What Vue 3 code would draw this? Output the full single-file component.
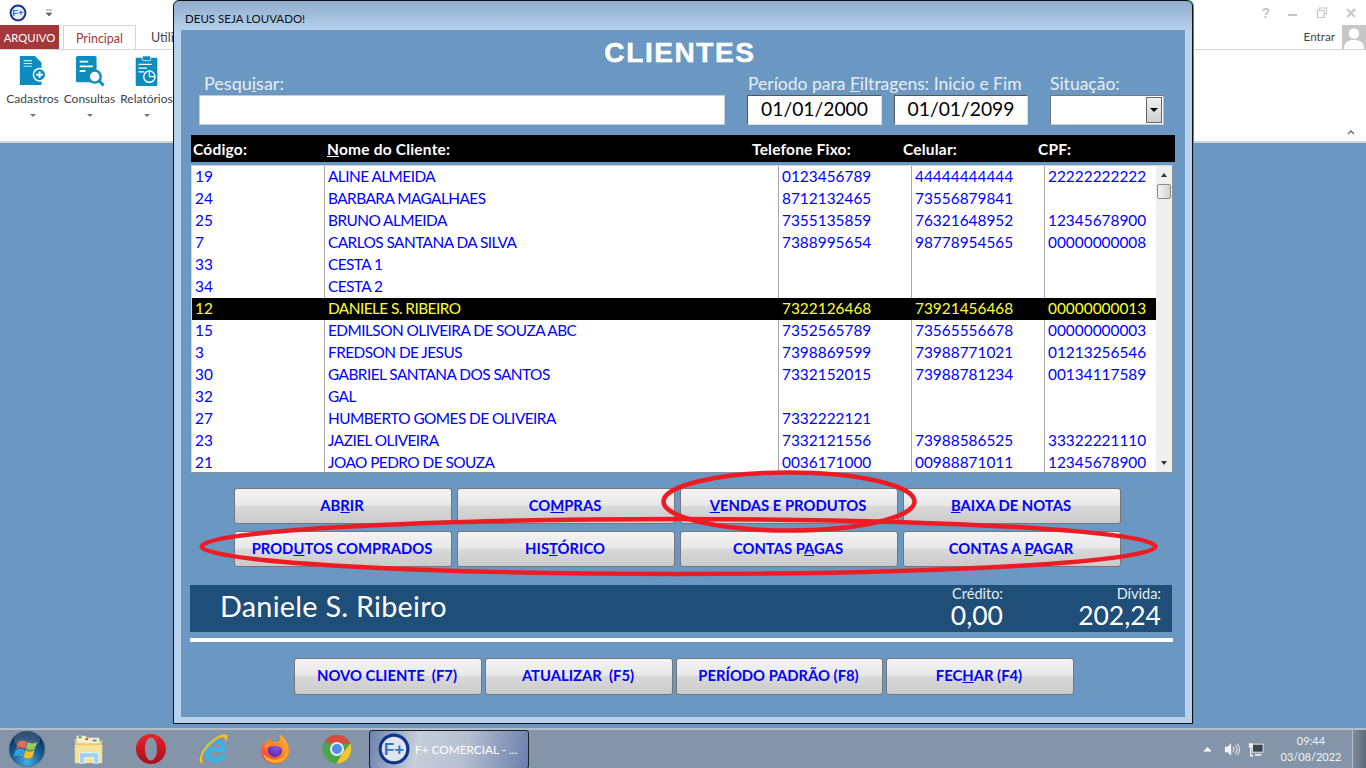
<script setup>
const rows = [
  ['19','ALINE ALMEIDA','0123456789','44444444444','22222222222'],
  ['24','BARBARA MAGALHAES','8712132465','73556879841',''],
  ['25','BRUNO ALMEIDA','7355135859','76321648952','12345678900'],
  ['7','CARLOS SANTANA DA SILVA','7388995654','98778954565','00000000008'],
  ['33','CESTA 1','','',''],
  ['34','CESTA 2','','',''],
  ['12','DANIELE S. RIBEIRO','7322126468','73921456468','00000000013'],
  ['15','EDMILSON OLIVEIRA DE SOUZA ABC','7352565789','73565556678','00000000003'],
  ['3','FREDSON DE JESUS','7398869599','73988771021','01213256546'],
  ['30','GABRIEL SANTANA DOS SANTOS','7332152015','73988781234','00134117589'],
  ['32','GAL','','',''],
  ['27','HUMBERTO GOMES DE OLIVEIRA','7332222121','',''],
  ['23','JAZIEL OLIVEIRA','7332121556','73988586525','33322221110'],
  ['21','JOAO PEDRO DE SOUZA','0036171000','00988871011','12345678900'],
]
</script>

<template>
  <div class="desktop">
    <header class="ribbon">
      <div class="qat">
        <svg class="logo-sm" viewBox="0 0 18 18"><circle cx="9" cy="9" r="7.4" fill="#e8eef5" stroke="#12348c" stroke-width="2"/><text x="9" y="12.4" text-anchor="middle" class="logo-t">F+</text></svg>
        <svg class="qat-arrow" viewBox="0 0 8 8"><path d="M1 1h6M1 4h6L4 7z" fill="#666" stroke="#666" stroke-width=".7"/></svg>
      </div>
      <nav class="tabs">
        <span class="tab-file">ARQUIVO</span>
        <span class="tab-active">Principal</span>
        <span class="tab-other">Utilitários</span>
        <span class="enter">Entrar</span>
        <span class="avatar"><svg viewBox="0 0 24 24"><rect width="24" height="24" fill="#c6c6c6"/><circle cx="12" cy="8.5" r="5.2" fill="#fff"/><path d="M2 24c0-7 4-9 10-9s10 2 10 9z" fill="#fff"/></svg></span>
      </nav>
      <div class="ribbon-body">
        <div class="rb-btn">
          <svg viewBox="0 0 30 34" class="rb-ic"><path d="M1 1h16l7 7v24H1z" fill="#0d8cc0"/><path d="M5 6h9M5 9h9M5 12h9" stroke="#cbe6f2" stroke-width="1.2"/><circle cx="22" cy="21" r="6.6" fill="#0d8cc0" stroke="#fff" stroke-width="1.6"/><path d="M18.5 21h7M22 17.5v7" stroke="#fff" stroke-width="2"/></svg>
          <span>Cadastros</span><i class="caret"></i>
        </div>
        <div class="rb-btn">
          <svg viewBox="0 0 32 34" class="rb-ic"><rect x="1" y="1" width="22" height="28" rx="2" fill="#0d8cc0"/><path d="M5 7h9M5 12h14M5 17h6" stroke="#fff" stroke-width="2"/><circle cx="21" cy="23" r="6.4" fill="#fff" stroke="#0d8cc0" stroke-width="2.6"/><path d="M25.5 27.5l5 5" stroke="#0d8cc0" stroke-width="3"/></svg>
          <span>Consultas</span><i class="caret"></i>
        </div>
        <div class="rb-btn">
          <svg viewBox="0 0 26 34" class="rb-ic"><rect x="1" y="3" width="23" height="30" rx="1" fill="#0d8cc0"/><rect x="8" y="1" width="9" height="5" rx="1" fill="#0d8cc0" stroke="#fff" stroke-width=".8"/><path d="M4 10h14M4 14h9M4 18h6" stroke="#fff" stroke-width="1.4"/><circle cx="15.5" cy="23" r="6" fill="#0d8cc0" stroke="#fff" stroke-width="1.5"/><path d="M15.5 23v-5M15.5 23h5.5" stroke="#fff" stroke-width="1.2"/></svg>
          <span>Relatórios</span><i class="caret"></i>
        </div>
        <svg class="collapse" viewBox="0 0 8 6"><path d="M1 5l3-3 3 3" fill="none" stroke="#666" stroke-width="1.3"/></svg>
      </div>
      <div class="winctl">
        <span>?</span>
        <svg viewBox="0 0 12 12"><path d="M1 8h9" stroke="#c4c4c4" stroke-width="2"/></svg>
        <svg viewBox="0 0 12 12"><path d="M3.5 3V1h7v6H8M1.500 3.500h6.500v7h-6.500z" fill="none" stroke="#c4c4c4" stroke-width="1.2"/></svg>
        <svg viewBox="0 0 12 12"><path d="M2 2l8 8M10 2l-8 8" stroke="#c4c4c4" stroke-width="1.8"/></svg>
      </div>
    </header>

    <main class="workspace"></main>

    <footer class="taskbar">
      <div class="orb">
        <svg viewBox="0 0 38 38"><defs><radialGradient id="og" cx=".5" cy=".85" r=".75"><stop offset="0" stop-color="#43b0e4"/><stop offset=".55" stop-color="#1a5d94"/><stop offset="1" stop-color="#0c2f56"/></radialGradient></defs><circle cx="19" cy="19" r="18" fill="url(#og)" stroke="#5d7c98"/><path d="M10 12c3-2 6-2 9 0l-2 7c-3-2-6-2-9 0z" fill="#e2502c"/><path d="M20 12c3 2 6 2 9 0l-2 7c-3 2-6 2-9 0z" fill="#8fc23f"/><path d="M7.500 20c3-2 6-2 9 0l-2 7c-3-2-6-2-9 0z" fill="#2f9fe0"/><path d="M17.500 20c3 2 6 2 9 0l-2 7c-3 2-6 2-9 0z" fill="#f6bd2b"/><ellipse cx="19" cy="10" rx="13" ry="8" fill="#fff" opacity=".16"/></svg>
      </div>
      <svg class="tb-ic folder" viewBox="0 0 32 34"><path d="M1 6h12l2 2h15v24H1z" fill="#e9c868"/><path d="M3 3h9l2 2h13v6H3z" fill="#f7efc6"/><rect x="5" y="3.500" width="3" height="2" fill="#3ca34a"/><rect x="12" y="5.500" width="3" height="2" fill="#d4483a"/><rect x="20" y="7" width="4" height="2" fill="#3a8fd8"/><path d="M1 13h29v19H1z" fill="#f5e29d"/><path d="M6 32V21h20v11h-5v-6H11v6z" fill="#9fd0ee" stroke="#e8f4fb"/></svg>
      <svg class="tb-ic" viewBox="0 0 30 32"><defs><linearGradient id="opg" x1="0" y1="0" x2="0" y2="1"><stop offset="0" stop-color="#e8232b"/><stop offset="1" stop-color="#a80f16"/></linearGradient></defs><path fill-rule="evenodd" fill="url(#opg)" d="M15 1c8.300 0 15 6.700 15 15s-6.700 15-15 15S0 24.300 0 16 6.700 1 15 1zm0 3.500c-3.700 0-6 5.100-6 11.500s2.300 11.500 6 11.500 6-5.100 6-11.500S18.700 4.500 15 4.500z"/></svg>
      <svg class="tb-ic" viewBox="0 0 30 32"><path fill-rule="evenodd" fill="#3bb3e6" d="M28 19H11.500c.5 3.500 3 5.500 6.500 5.500 2.500 0 4.500-1 5.500-3h4.800c-1.500 5-5.300 8-10.800 8C10.500 29.500 6 24.500 6 18S10.500 6.500 17 6.500 28 11.500 28 18zM23 15c-.5-3-2.700-4.700-5.500-4.700S12.500 12 12 15z"/><path fill="#f5bd1f" d="M3 31C-1 27 4 15 13 8 20 2 27 0 29 2c1.500 1.500 0 5-2 8 .5-3 .5-5-1-5.500C23 3.500 17 7 12 12 6 18 2 25 5 28c-1 1-1.500 2-2 3z"/></svg>
      <svg class="tb-ic" viewBox="0 0 30 32"><defs><linearGradient id="ffg" x1="1" y1="0" x2=".1" y2="1"><stop offset="0" stop-color="#ffc030"/><stop offset=".55" stop-color="#ff7a24"/><stop offset="1" stop-color="#f3304f"/></linearGradient><radialGradient id="ffp" cx=".6" cy=".3" r=".8"><stop offset="0" stop-color="#8a55e8"/><stop offset="1" stop-color="#5a23a0"/></radialGradient></defs><path fill="url(#ffg)" d="M19 1c5 3 10 8.500 10 16.500C29 25 23 31 15 31S1 25 1 17c0-3 1-6 2.500-8 0 1.500.5 3 1.500 3.500C6 9 8 6.500 11 5.500c-.5 2 0 3.500 1.500 4.500 3 0 6.500-1 7.500-3 .5-2 0-4-1-6z"/><circle cx="15" cy="17" r="7.200" fill="url(#ffp)"/><path fill="#ff8a22" d="M4 14c2-4 6-6 10-5 4 0 8 3 9 8-3-4-7-5-10-4-2 .5-4 .5-5 1.500-1 1.500-2.500 1-4-.5z"/><path fill="#ffb52c" d="M3 20c3 5 10 8 16 6 4-1 7-4 8-8 1 5-3 11-11 12C9 30.500 4 26 3 20z"/></svg>
      <svg class="tb-ic" viewBox="0 0 30 32"><circle cx="15" cy="16" r="14.500" fill="#4aa54d"/><path d="M2.500 9A14.500 14.500 0 0 1 28.300 11H15z" fill="#dc4a3d"/><path d="M28.300 10.500a14.500 14.500 0 0 1-14 20l6.200-10z" fill="#f6c42d"/><circle cx="15" cy="16" r="7" fill="#e8eef5"/><circle cx="15" cy="16" r="5" fill="#4f8de8"/></svg>
      <div class="task">
        <svg class="task-logo" viewBox="0 0 30 30"><circle cx="15" cy="15" r="13" fill="#e0e6ee" stroke="#12348c" stroke-width="3"/><text x="15" y="20.500" text-anchor="middle" class="task-logo-t">F+</text></svg>
        <span>F+ COMERCIAL - ...</span>
      </div>
      <div class="tray">
        <svg class="tray-up" viewBox="0 0 10 6"><path d="M0 5.500L5 0l5 5.500z" fill="#fff"/></svg>
        <svg class="tray-vol" viewBox="0 0 18 16"><path d="M1 5h3l4-4v14l-4-4H1z" fill="#f2f2f2"/><path d="M10 5c1.500 2 1.500 4 0 6M12.500 3c2.500 3 2.500 7 0 10M15 1.500c3 4 3 9 0 13" fill="none" stroke="#e6e6e6" stroke-width="1.200"/></svg>
        <svg class="tray-net" viewBox="0 0 18 16"><rect x="5" y="2" width="12" height="9" fill="#3a4650" stroke="#f0f0f0"/><path d="M8 14h7" stroke="#f0f0f0" stroke-width="2"/><rect x="1" y="1" width="4" height="5" fill="#f4f4f4"/><path d="M3 6v9h3" fill="none" stroke="#f4f4f4" stroke-width="1.500"/></svg>
        <div class="clock"><span>09:44</span><span>03/08/2022</span></div>
        <div class="show-desk"></div>
      </div>
    </footer>

    <section class="window">
      <div class="win-title">DEUS SEJA LOUVADO!</div>
      <div class="client">
        <h1>CLIENTES</h1>
        <div class="filters">
          <label class="f-search"><span class="lbl lbl-big">Pesq<span class="no">u</span><u>i</u>sar:</span><span class="input"></span></label>
          <div class="f-dates">
            <span class="lbl">Período para <u>F</u>iltragens: Inicio e Fim</span>
            <div class="date-row"><span class="input date">01/01/2000</span><span class="input date">01/01/2099</span></div>
          </div>
          <label class="f-sit"><span class="lbl">Situação:</span>
            <span class="input combo"><span class="combo-btn"><i></i></span></span>
          </label>
        </div>

        <div class="thead">
          <span>Código:</span><span><u>N</u>ome do Cliente:</span><span>Telefone Fixo:</span><span>Celular:</span><span>CPF:</span>
        </div>
        <div class="list">
          <div class="rows">
            <div v-for="r in rows" :key="r[0]" class="row" :class="{ sel: r[0] === '12' }">
              <span v-for="(c, i) in r" :key="i" class="cell" :class="{ name: i === 1 }">{{ c }}</span>
            </div>
          </div>
          <div class="scroll">
            <span class="sb-up"></span>
            <span class="sb-thumb"></span>
            <span class="sb-track"></span>
            <span class="sb-down"></span>
          </div>
        </div>

        <div class="actions">
          <button>AB<u>R</u>IR</button>
          <button>CO<u>M</u>PRAS</button>
          <button><u>V</u>ENDAS E PRODUTOS</button>
          <button><u>B</u>AIXA DE NOTAS</button>
          <button>PROD<u>U</u>TOS COMPRADOS</button>
          <button>HIS<u>T</u>ÓRICO</button>
          <button>CONTAS P<u>A</u>GAS</button>
          <button>CONTAS A <u>P</u>AGAR</button>
        </div>

        <div class="banner">
          <span class="b-name">Daniele S. Ribeiro</span>
          <div class="b-val credit"><small>Crédito:</small><b>0,00</b></div>
          <div class="b-val debt"><small>Dívida:</small><b>202,24</b></div>
        </div>
        <div class="rule"></div>

        <div class="footer-btns">
          <button>NOVO CLIENTE&nbsp; (F7)</button>
          <button>ATUALIZAR&nbsp; (F5)</button>
          <button class="wide">PERÍODO PADRÃO (F8)</button>
          <button>FEC<u>H</u>AR (F4)</button>
        </div>
      </div>
    </section>

    <svg class="marks" viewBox="0 0 1366 768">
      <ellipse cx="789" cy="501.500" rx="125.500" ry="29" />
      <ellipse cx="678.500" cy="546.500" rx="477" ry="27.500" />
    </svg>
  </div>
</template>

<style scoped>
.desktop { position: relative; width: 1366px; height: 768px; overflow: hidden; display: flex; flex-direction: column; background: #6a98c3; font-family: Lato, "Liberation Sans", sans-serif; }

/* ribbon */
.ribbon { position: relative; height: 143px; flex: none; background: #fff; border-bottom: 2px solid #d4d4d4; box-sizing: border-box; }
.qat { height: 25px; display: flex; align-items: center; padding-left: 9px; gap: 18px; box-sizing: border-box; }
.logo-sm { width: 18px; height: 18px; }
.logo-t { font: 800 9.500px "Liberation Sans", sans-serif; fill: #2a78d0; }
.qat-arrow { width: 8px; height: 8px; }
.tabs { height: 25px; display: flex; align-items: stretch; font-size: 12.500px; color: #444; }
.tab-file { width: 59px; background: #a4373a; color: #fff; font-size: 11.300px; display: flex; align-items: center; justify-content: center; }
.tab-active { width: 73px; margin-left: 4px; color: #a4373a; border: 1px solid #d4d4d4; border-bottom: 0; background: #fff; box-sizing: border-box; display: flex; align-items: center; justify-content: center; }
.tab-other { margin-left: 15px; display: flex; align-items: center; }
.enter { margin-left: auto; display: flex; align-items: center; margin-right: 7px; padding-bottom: 3px; font-size: 11.700px; color: #444; }
.avatar { width: 24px; height: 24px; }
.avatar svg { width: 24px; height: 24px; display: block; }
.ribbon-body { display: flex; height: 91px; border-top: 1px solid #d4d4d4; margin-top: -1px; position: relative; }
.rb-btn { width: 57px; display: flex; flex-direction: column; align-items: center; font-size: 12px; color: #444; padding-top: 5px; box-sizing: border-box; }
.rb-btn:first-child { margin-left: 4px; }
.rb-ic { height: 32px; width: 30px; margin-bottom: 4px; }
.caret { margin-top: 8px; width: 0; height: 0; border: 3px solid transparent; border-top: 3px solid #777; border-bottom: 0; }
.collapse { position: absolute; right: 11px; bottom: 6px; width: 8px; height: 6px; }
.winctl { position: absolute; top: 5px; right: 9px; display: flex; gap: 17px; align-items: center; color: #c4c4c4; font: 700 14px "Liberation Sans", sans-serif; }
.winctl svg { width: 12px; height: 12px; }
.workspace { flex: 1; }

/* taskbar */
.taskbar { height: 40px; flex: none; display: flex; align-items: center; background: #8495a9; border-top: 2px solid #b4bec9; box-sizing: border-box; position: relative; }
.orb { width: 38px; height: 38px; margin-left: 8px; }
.orb svg { width: 38px; height: 38px; display: block; }
.tb-ic { width: 30px; height: 32px; margin-left: 32px; flex: none; }
.tb-ic.folder { margin-left: 27px; width: 32px; margin-right: -1px; }
.task { width: 160px; height: 39px; margin-left: 17px; box-sizing: border-box; border: 1px solid #1a1f28; border-radius: 3px; background: linear-gradient(100deg, #6d82ad 0%, #c6ced9 30%, #b5bfd0 60%, #6a7fac 100%); display: flex; align-items: center; gap: 5px; padding-left: 8px; color: #fff; font-size: 11.800px; white-space: nowrap; }
.task-logo { width: 32px; height: 32px; flex: none; }
.task-logo-t { font: 800 16px "Liberation Sans", sans-serif; fill: #2a78d0; }
.tray { margin-left: auto; display: flex; align-items: center; height: 100%; }
.tray-up { width: 9px; height: 5px; margin-right: 12px; }
.tray-vol { width: 16px; height: 15px; margin-right: 8px; }
.tray-net { width: 16px; height: 15px; margin-right: 9px; }
.clock { width: 76px; display: flex; flex-direction: column; align-items: center; color: #eef1f4; font-size: 11px; line-height: 16px; margin-right: 3px; }
.show-desk { width: 14px; height: 100%; background: linear-gradient(90deg, #7c8b9d, #5c6a78); border-left: 1px solid #b4bec9; box-sizing: border-box; }

/* window */
.window { position: absolute; left: 173px; top: 0; width: 1020px; height: 724px; box-sizing: border-box; border: 1px solid #111; border-radius: 6px 6px 0 0; padding: 0 7px 6px; background: linear-gradient(180deg, #8fadcd 0, #b8d2ec 30px, #b8d2ec 100%); display: flex; flex-direction: column; box-shadow: 1px 0 0 #2aa; }
.win-title { height: 29px; flex: none; font-size: 11.500px; color: #111; display: flex; align-items: center; padding: 6px 4px 0; box-sizing: border-box; }
.client { flex: 1; background: #6a98c3; display: flex; flex-direction: column; padding: 0 10px; box-sizing: border-box; min-height: 0; }
h1 { margin: 0; height: 44px; padding: 6px 6px 0 0; box-sizing: border-box; text-align: center; font: 700 28px/34px "Liberation Sans", sans-serif; letter-spacing: 1.600px; -webkit-text-stroke: .5px #fff; color: #fff; }
.filters { display: flex; height: 51px; margin-left: 8px; flex: none; }
.lbl { display: block; font-size: 17.500px; line-height: 19px; color: #e8eef5; height: 21px; font-weight: 400; white-space: nowrap; }
.lbl-big { font-size: 18px; }
.no { font: inherit; }
.f-search { width: 526px; display: block; }
.f-search .lbl { padding-left: 5px; }
.f-dates { width: 281px; margin-left: 22px; }
.f-dates .lbl { padding-left: 1px; }
.f-sit { width: 114px; margin-left: 22px; display: block; }
.input { display: block; height: 30px; background: #fff; box-sizing: border-box; border: 1px solid #c5ccd4; }
.date-row { display: flex; gap: 12px; }
.date { width: 135px; border-color: #555 #ddd #ddd #555; border-width: 1px; text-align: center; color: #000; font-size: 19.300px; line-height: 26px; }
.date + .date { width: 134px; }
.combo { position: relative; border-color: #777 #bbb #ccc #777; }
.combo-btn { position: absolute; right: 1px; top: 1px; bottom: 1px; width: 16px; border: 1px solid #666; box-sizing: border-box; background: linear-gradient(180deg, #f0f0f0, #cfcfcf); display: flex; align-items: center; justify-content: center; }
.combo-btn i { border: 4px solid transparent; border-top: 4px solid #000; border-bottom: 0; }

.thead { margin-top: 10px; height: 27px; width: 984px; background: #000; color: #fff; font-weight: 700; font-size: 15.500px; letter-spacing: .2px; flex: none; display: grid; grid-template-columns: 134px 425px 151px 135px 1fr; align-items: center; padding-left: 2px; box-sizing: border-box; white-space: nowrap; }
.list { margin-top: 3px; width: 982px; height: 308px; flex: none; background: #fff; border: 1px solid #8a9099; border-left-color: #cfd6dd; border-top-color: #cfd6dd; box-sizing: border-box; display: flex; overflow: hidden; }
.rows { flex: 1; min-width: 0; }
.row { display: grid; grid-template-columns: 132px 454px 133px 133px 1fr; height: 22px; color: #0000ff; font-size: 15.400px; line-height: 20px; }
.cell { padding-left: 3px; box-sizing: border-box; border-left: 1px solid #a8a8a8; white-space: nowrap; overflow: hidden; }
.cell:first-child { border-left: 0; padding-left: 3px; }
.cell.name { letter-spacing: -.55px; }
.row.sel { background: #000; color: #ffff33; }
.row.sel .cell { border-left-color: #000; }
.scroll { width: 16px; flex: none; background: #efefef; display: flex; flex-direction: column; }
.sb-up, .sb-down { height: 18px; flex: none; display: flex; align-items: center; justify-content: center; }
.sb-up::after { content: ""; border: 3.500px solid transparent; border-bottom: 4px solid #333; border-top: 0; }
.sb-down::after { content: ""; border: 3.500px solid transparent; border-top: 4px solid #333; border-bottom: 0; }
.sb-thumb { height: 15px; margin: 0 1px; border: 1px solid #8a8a8a; border-radius: 2px; background: linear-gradient(90deg, #f4f4f4, #d4d4d4); box-sizing: border-box; }
.sb-track { flex: 1; }

button { font-family: Lato, "Liberation Sans", sans-serif; font-weight: 700; font-size: 14.800px; color: #0000ff; border: 1px solid #777; border-radius: 3px; padding: 0 2px 2px 0; background: linear-gradient(180deg, #f3f3f3 0%, #e8e8e8 48%, #d9d9d9 50%, #cacaca 100%); cursor: default; white-space: nowrap; }
.actions { margin: 15px 0 0 43px; width: 887px; display: grid; grid-template-columns: repeat(4, 218px); grid-auto-rows: 36px; column-gap: 5px; row-gap: 7px; flex: none; }
.banner { margin-top: 18px; width: 982px; margin-left: -1px; height: 47px; background: #1f4e79; color: #fff; display: flex; align-items: center; flex: none; box-sizing: border-box; padding: 0 11px 0 30px; position: relative; }
.b-name { font-size: 28.800px; line-height: 42px; height: 47px; flex: 1; letter-spacing: .25px; }
.b-val { display: flex; flex-direction: column; align-items: flex-end; margin-top: -2px; }
.b-val small { font-size: 14.500px; line-height: 15px; color: #e8eef5; }
.b-val b { font-weight: 400; font-size: 26.500px; line-height: 28px; }
.credit { width: 52px; margin-right: 76px; }
.debt { width: 82px; }
.rule { margin: 6px 0 0 -1px; width: 983px; height: 4px; background: #fff; flex: none; }
.footer-btns { margin: 16px 0 0 103px; display: grid; grid-template-columns: 188px 188px 207px 188px; grid-auto-rows: 37px; column-gap: 3px; flex: none; }
.footer-btns button { padding-bottom: 3px; }

.marks { position: absolute; left: 0; top: 0; width: 1366px; height: 768px; pointer-events: none; fill: none; }
.marks ellipse { stroke: #ed1c24; stroke-width: 4.500; }
</style>

<style>
html, body { margin: 0; background: #6a98c3; }
</style>
